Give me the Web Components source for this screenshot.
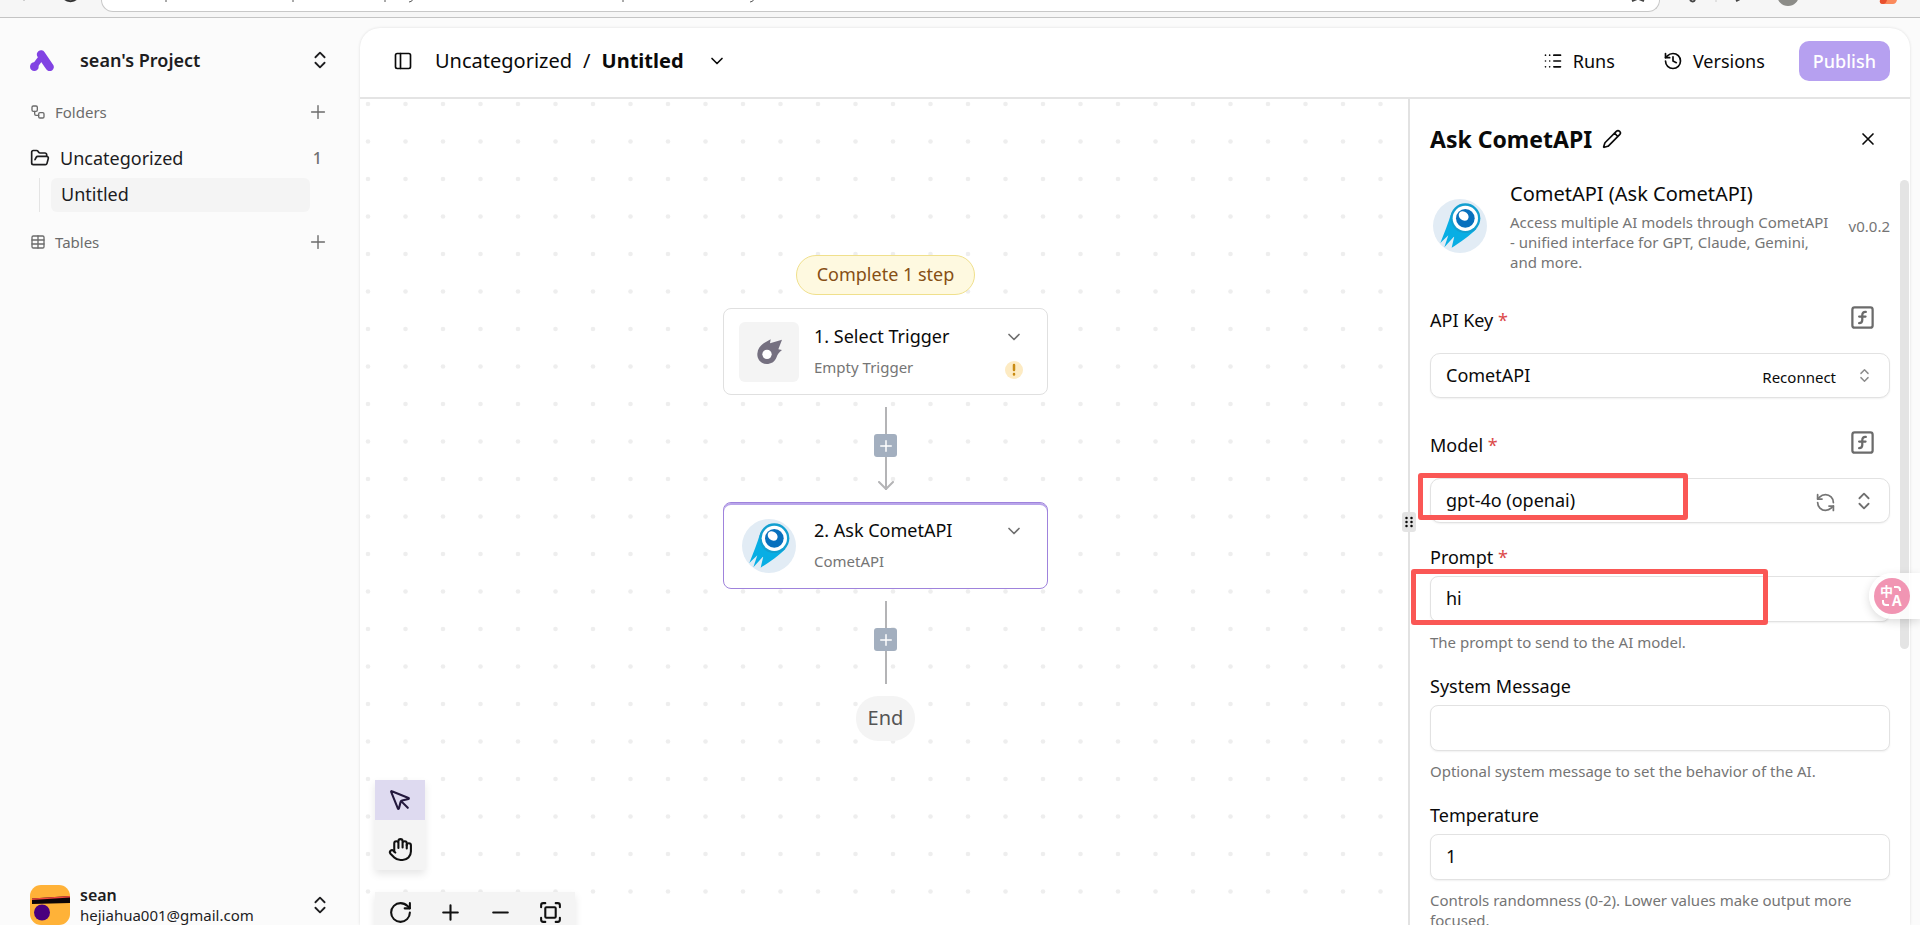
<!DOCTYPE html>
<html lang="en">
<head>
<meta charset="utf-8">
<title>Untitled</title>
<style>
	html, body {
		margin: 0;
		height: 100%;
		overflow: hidden;
	}
	body {
		font-family: 'Noto Sans', 'Open Sans', sans-serif;
		color: #0a0a0a;
	}
</style>
</head>
<body>
<app-shell></app-shell>

<script>
const html = (strings, ...expressions) => {
	let template = document.createElement('template');
	template.innerHTML = strings.reduce(
		(result, string, index) => result + string + (expressions[index] ?? ''), ''
	);
	return template
}

const define = (name, template, Base = HTMLElement) => {
	customElements.define(name, class extends Base {
		constructor() {
			super();
			this.attachShadow({mode: 'open'}).appendChild(
				template.content.cloneNode(true)
			);
		}
	});
}

/**
 * UiIcon
 */

const icons = {
	'chevrons': '<path d="m7 15 5 5 5-5M7 9l5-5 5 5"/>',
	'chevron-down': '<path d="m6 9 6 6 6-6"/>',
	'plus': '<path d="M5 12h14M12 5v14"/>',
	'minus': '<path d="M5 12h14"/>',
	'close': '<path d="M18 6 6 18M6 6l12 12"/>',
	'workflow': '<rect x="3" y="3" width="8" height="8" rx="2"/><path d="M7 11v4a2 2 0 0 0 2 2h4"/><rect x="13" y="13" width="8" height="8" rx="2"/>',
	'folder': '<path d="m6 14 1.500-2.900A2 2 0 0 1 9.240 10H20a2 2 0 0 1 1.940 2.500l-1.540 6a2 2 0 0 1-1.950 1.500H4a2 2 0 0 1-2-2V5a2 2 0 0 1 2-2h3.900a2 2 0 0 1 1.690.900l.810 1.200a2 2 0 0 0 1.670.900H18a2 2 0 0 1 2 2v2"/>',
	'table': '<rect x="3" y="3" width="18" height="18" rx="2"/><path d="M12 3v18M3 9h18M3 15h18"/>',
	'panel': '<rect x="3" y="3" width="18" height="18" rx="2"/><path d="M9 3v18"/>',
	'runs': '<path d="M3 5h.01M3 12h.01M3 19h.01M8 5h.01M8 12h.01M8 19h.01M13 5h8M13 12h8M13 19h8"/>',
	'history': '<path d="M3 12a9 9 0 1 0 9-9 9.750 9.750 0 0 0-6.740 2.740L3 8"/><path d="M3 3v5h5M12 7v5l4 2"/>',
	'pencil': '<path d="M21.170 6.800a1 1 0 0 0-3.980-3.980L3.840 16.170a2 2 0 0 0-.500.830l-1.320 4.350a.500.500 0 0 0 .620.620l4.350-1.320a2 2 0 0 0 .830-.500zM15 5l4 4"/>',
	'function': '<rect x="3" y="3" width="18" height="18" rx="2"/><path d="M9 17c2 0 2.800-1 2.800-2.800V10c0-2 1-3.300 3.200-3M9 11.200h5.700"/>',
	'refresh': '<path d="M21 12a9 9 0 0 0-9-9 9.750 9.750 0 0 0-6.740 2.740L3 8"/><path d="M3 3v5h5M3 12a9 9 0 0 0 9 9 9.750 9.750 0 0 0 6.740-2.740L21 16"/><path d="M16 16h5v5"/>',
	'rotate': '<path d="M21 12a9 9 0 1 1-9-9c2.520 0 4.930 1 6.740 2.740L21 8"/><path d="M21 3v5h-5"/>',
	'pointer': '<path d="M12.600 12.600 19 19M3.700 3.040a.500.500 0 0 0-.660.660l6.500 16a.500.500 0 0 0 .950-.060l1.570-6.080a2 2 0 0 1 1.480-1.480l6.120-1.580a.500.500 0 0 0 .060-.950z"/>',
	'hand': '<path d="M18 11V6a2 2 0 0 0-4 0M14 10V4a2 2 0 0 0-4 0v2M10 10.500V6a2 2 0 0 0-4 0v8"/><path d="M18 8a2 2 0 1 1 4 0v6a8 8 0 0 1-8 8h-2c-2.800 0-4.500-.860-5.990-2.340l-3.600-3.600a2 2 0 0 1 2.830-2.820L7 15"/>',
	'fullscreen': '<path d="M3 7V5a2 2 0 0 1 2-2h2M17 3h2a2 2 0 0 1 2 2v2M21 17v2a2 2 0 0 1-2 2h-2M7 21H5a2 2 0 0 1-2-2v-2"/><rect x="7" y="7" width="10" height="10" rx="1"/>',
	'grip': '<g fill="currentColor" stroke="none"><circle cx="7" cy="4" r="2.500"/><circle cx="7" cy="12" r="2.500"/><circle cx="7" cy="20" r="2.500"/><circle cx="17" cy="4" r="2.500"/><circle cx="17" cy="12" r="2.500"/><circle cx="17" cy="20" r="2.500"/></g>',
};

const uiIconTemplate = html`
	<style>
		:host {
			display: inline-block;
			flex: none;
			width: var(--icon-size, 20px);
			height: var(--icon-size, 20px);
		}
		svg {
			display: block;
			width: 100%;
			height: 100%;
			fill: none;
			stroke: currentColor;
			stroke-width: var(--icon-stroke, 2);
			stroke-linecap: round;
			stroke-linejoin: round;
		}
	</style>
	<svg viewBox='0 0 24 24' aria-hidden='true'></svg>
`;

class UiIcon extends HTMLElement {
	constructor() {
		super();
		this.attachShadow({mode: 'open'}).appendChild(
			uiIconTemplate.content.cloneNode(true)
		);
	}

	static get observedAttributes() { return ['name'] }

	attributeChangedCallback(_name, _oldValue, newValue) {
		this.shadowRoot.querySelector('svg').innerHTML = icons[newValue] ?? '';
	}
}

customElements.define('ui-icon', UiIcon);

/**
 * IconButton
 */

define('icon-button', html`
	<style>
		:host {
			display: inline-flex;
			flex: none;
		}
		button {
			display: flex;
			align-items: center;
			gap: 10px;
			margin: 0;
			padding: 0;
			border: 0;
			background: none;
			color: inherit;
			font: inherit;
			cursor: pointer;
		}
	</style>
	<button type='button'><slot></slot></button>
`);

/**
 * CometLogo
 */

define('comet-logo', html`
	<style>
		:host {
			display: block;
			flex: none;
			width: 54px;
			height: 54px;
		}
		svg { display: block; }
	</style>
	<svg width='54' height='54' viewBox='0 0 162 162' aria-hidden='true'>
		<circle cx='81' cy='81' r='81' fill='#e2ecf5'/>
		<path d='M53 48C46 72 34 102 22 132L46 109 34 145 64 112 56 146C78 133 112 108 131 89Z' fill='#08aee4'/>
		<circle cx='97' cy='58' r='45' fill='#129fd0'/>
		<path d='M54 70C62 98 84 104 108 101L80 118 46 109Z' fill='#08aee4'/>
		<circle cx='97' cy='58' r='38' fill='#fff'/>
		<circle cx='97' cy='58' r='28' fill='#0870bd'/>
		<ellipse cx='92' cy='51' rx='16' ry='13' transform='rotate(40 92 51)' fill='#fff'/>
	</svg>
`);

/**
 * BrowserStrip
 */

define('browser-strip', html`
	<style>
		:host {
			display: block;
			height: 17px;
			flex: none;
			position: relative;
			background: #f6f6f6;
			border-bottom: 1px solid #c4c4c4;
			overflow: hidden;
		}
		.address {
			height: 11px;
			margin: 0 260px 0 101px;
			border: 1px solid #c8c8c8;
			border-top: 0;
			border-radius: 0 0 20px 20px;
			background: #fff;
		}
		svg {
			position: absolute;
			top: 0;
		}
		.start { left: 0; }
		.end { right: 0; }
	</style>
	<div class='address'></div>
	<svg class='start' width='800' height='10' aria-hidden='true' fill='none' stroke='#555'>
		<path d='M24 0v1' stroke='#aaa'/>
		<path d='M64 -2a7 5 0 0 0 13 0' stroke='#333' stroke-width='2'/>
		<path d='M166 0v2M293 0v2M385 0v2M623 0v2'/>
		<path d='M409 2q3 0 4-3M750 2q3 0 4-3'/>
	</svg>
	<svg class='end' width='300' height='10' aria-hidden='true'>
		<path d='M12 1l5-2M24 1l-5-2M70 0q3 3 5 0M116 1l4-2' stroke='#444' stroke-width='2' fill='none'/>
		<path d='M96 0v2' stroke='#ccc'/>
		<circle cx='168' cy='-5' r='11' fill='#8c8c88'/>
		<path d='M260 0h17q-1 4-4 4h-10q-4 0-3-4z' fill='#fb8a5c'/>
		<path d='M260 0h7q-1 4-4 4-4 0-3-4z' fill='#e8502e'/>
	</svg>
`);

/**
 * SideBar
 */

define('side-bar', html`
	<style>
		:host {
			display: flex;
			flex-direction: column;
			box-sizing: border-box;
			width: 360px;
			flex: none;
			padding: 27px 30px 0;
			font-size: 18px;
			line-height: 24px;
			color: #1d1d1f;
		}
		.row {
			display: flex;
			align-items: center;
		}
		.grow { flex: 1; }
		.project {
			height: 30px;
			font-weight: 600;
		}
		.project .grow { padding-left: 26px; }
		.section {
			margin-top: 25px;
			height: 24px;
			font-size: 15px;
			color: #6b6b6b;
			--icon-size: 16px;
		}
		.section .grow { padding-left: 9px; }
		.section icon-button {
			margin-right: 1px;
			--icon-size: 22px;
			--icon-stroke: 1.500;
		}
		.project icon-button, .user icon-button {
			margin-right: -1px;
			--icon-size: 22px;
		}
		.folder {
			margin-top: 22px;
			height: 24px;
		}
		.folder .grow { padding-left: 10px; }
		.count {
			padding-right: 8px;
			font-size: 16px;
			font-weight: 500;
			color: #707070;
		}
		.children {
			margin: 8px 20px 0 9px;
			padding-left: 11px;
			border-left: 1px solid #e4e4e4;
		}
		.children a {
			display: block;
			padding: 4px 10px 6px;
			border-radius: 6px;
			background: #f4f4f4;
			color: inherit;
			text-decoration: none;
		}
		.tables { margin-top: 18px; }
		.user {
			margin-top: auto;
			gap: 10px;
			height: 40px;
			line-height: 20px;
			font-size: 15px;
		}
		.user b {
			display: block;
			font-size: 16px;
			font-weight: 600;
		}
	</style>
	<div class='row project'>
		<svg width='24' height='21' viewBox='0 0 72 63' aria-hidden='true' fill='#8142e3' stroke='#8142e3' stroke-linecap='round'>
			<path d='M33 13 59 51' stroke-width='25'/>
			<path d='M15 47 32 25' stroke-width='17'/>
			<circle cx='13' cy='50' r='13' stroke='none'/>
		</svg>
		<span class='grow'>sean's Project</span>
		<icon-button><ui-icon name='chevrons'></ui-icon></icon-button>
	</div>
	<div class='row section'>
		<ui-icon name='workflow'></ui-icon>
		<span class='grow'>Folders</span>
		<icon-button><ui-icon name='plus'></ui-icon></icon-button>
	</div>
	<div class='row folder'>
		<ui-icon name='folder'></ui-icon>
		<span class='grow'>Uncategorized</span>
		<span class='count'>1</span>
	</div>
	<div class='children'><a href='#untitled'>Untitled</a></div>
	<div class='row section tables'>
		<ui-icon name='table'></ui-icon>
		<span class='grow'>Tables</span>
		<icon-button><ui-icon name='plus'></ui-icon></icon-button>
	</div>
	<div class='row user'>
		<svg width='40' height='40' viewBox='0 0 40 40' aria-hidden='true'>
			<rect width='40' height='40' rx='11' fill='#ffb238'/>
			<path d='M2 13.500 40 11v7L2 19z' fill='#0c0508'/>
			<path d='M2 13.500 40 11v1.500L2 15z' fill='#f0483e'/>
			<circle cx='12' cy='27.500' r='8' fill='#49007e'/>
		</svg>
		<span class='grow'><b>sean</b>hejiahua001@gmail.com</span>
		<icon-button><ui-icon name='chevrons'></ui-icon></icon-button>
	</div>
`);

/**
 * FlowHeader
 */

define('flow-header', html`
	<style>
		:host {
			display: flex;
			align-items: center;
			flex: none;
			box-sizing: border-box;
			height: 71px;
			padding: 0 20px 3px 33px;
			border-bottom: 2px solid #e4e4e4;
			font-size: 20px;
			line-height: 28px;
		}
		nav {
			display: flex;
			align-items: center;
			flex: 1;
			gap: 11px;
			padding-left: 22px;
		}
		nav a {
			color: inherit;
			text-decoration: none;
		}
		b { font-weight: 700; }
		nav icon-button {
			padding-left: 12px;
			--icon-size: 20px;
		}
		.action {
			margin-right: 48px;
			font-size: 18px;
		}
		.publish {
			box-sizing: border-box;
			height: 40px;
			margin-left: -14px;
			padding: 0 14px;
			border: 0;
			border-radius: 10px;
			background: #b6a0f0;
			color: #fff;
			font: inherit;
			font-size: 18px;
			font-weight: 500;
		}
	</style>
	<icon-button><ui-icon name='panel'></ui-icon></icon-button>
	<nav>
		<a href='#uncategorized'>Uncategorized</a>
		<span>/</span>
		<b>Untitled</b>
		<icon-button><ui-icon name='chevron-down'></ui-icon></icon-button>
	</nav>
	<icon-button class='action'><ui-icon name='runs'></ui-icon>Runs</icon-button>
	<icon-button class='action'><ui-icon name='history'></ui-icon>Versions</icon-button>
	<button class='publish' type='button'>Publish</button>
`);

/**
 * FlowStep
 */

define('flow-step', html`
	<style>
		:host {
			display: grid;
			grid-template-columns: 60px 1fr auto;
			column-gap: 15px;
			align-items: center;
			box-sizing: border-box;
			width: 325px;
			height: 87px;
			padding: 0 20px 0 15px;
			border: 1px solid #e0e0e0;
			border-radius: 8px;
			background: #fff;
			font-size: 18px;
			line-height: 26px;
		}
		:host([selected]) {
			border-color: #9f83dc;
			box-shadow: inset 0 2px #b9a5ea;
		}
		.icon {
			display: flex;
			align-items: center;
			justify-content: center;
			height: 60px;
			border-radius: 6px;
		}
		:host(:not([selected])) .icon { background: #f4f4f4; }
		small {
			display: block;
			margin-top: 5px;
			font-size: 15px;
			color: #757575;
		}
		.side {
			display: flex;
			flex-direction: column;
			align-items: center;
			align-self: start;
			gap: 14px;
			width: 26px;
			padding-top: 18px;
			color: #6f6f6f;
		}
	</style>
	<div class='icon'><slot name='icon'></slot></div>
	<div><slot></slot><small><slot name='subtitle'></slot></small></div>
	<div class='side'>
		<icon-button><ui-icon name='chevron-down'></ui-icon></icon-button>
		<slot name='status'></slot>
	</div>
`);

/**
 * FlowEdge
 */

define('flow-edge', html`
	<style>
		:host {
			display: flex;
			flex-direction: column;
			align-items: center;
			padding: 12px 0;
			color: #b4b4b6;
		}
		.line {
			width: 2px;
			height: 27px;
			background: currentColor;
		}
		.tail { height: 33px; }
		button {
			display: flex;
			align-items: center;
			justify-content: center;
			width: 23px;
			height: 23px;
			padding: 0;
			border: 0;
			border-radius: 3px;
			background: #a3afbf;
			color: #fff;
			--icon-size: 18px;
		}
		svg {
			display: none;
			margin-top: -9px;
		}
		:host([arrow]) svg { display: block; }
	</style>
	<div class='line'></div>
	<button type='button' aria-label='Add step'><ui-icon name='plus'></ui-icon></button>
	<div class='line tail'></div>
	<svg width='16' height='9' viewBox='0 0 16 9' fill='none' stroke='currentColor' stroke-width='2' stroke-linecap='round' stroke-linejoin='round' aria-hidden='true'><path d='M1 1l7 7 7-7'/></svg>
`);

/**
 * FlowCanvas
 */

define('flow-canvas', html`
	<style>
		:host {
			display: block;
			flex: 1;
			min-width: 0;
			position: relative;
			overflow: hidden;
		}
		.dots {
			position: absolute;
			inset: 0;
			width: 100%;
			height: 100%;
		}
		.flow {
			position: relative;
			display: flex;
			flex-direction: column;
			align-items: center;
			padding: 156px 0 0 3px;
		}
		.todo {
			box-sizing: border-box;
			height: 40px;
			margin-bottom: 13px;
			padding: 0 20px;
			border: 1px solid #f0e08c;
			border-radius: 20px;
			background: #fef9e0;
			color: #864f14;
			font-size: 18px;
			line-height: 36px;
		}
		.end {
			padding: 8px 12px 9px;
			border-radius: 22px;
			background: #f4f4f4;
			color: #545454;
			font-size: 20px;
			line-height: 28px;
		}
		.warning {
			display: block;
		}
		.tools, .zoom {
			position: absolute;
			left: 15px;
			display: flex;
			background: #f4f4f4;
			box-shadow: 0 4px 8px rgba(0, 0, 0, 0.1);
			color: #111;
			--icon-size: 25px;
		}
		.tools {
			flex-direction: column;
			bottom: 55px;
		}
		.zoom { bottom: -7px; }
		.tools icon-button, .zoom icon-button {
			justify-content: center;
			width: 50px;
			height: 40px;
		}
		.tools icon-button + icon-button { padding-top: 8px; height: 42px; }
		.tools icon-button:first-child { background: #dedaf0; color: #23183d; }
	</style>
	<svg class='dots' aria-hidden='true'>
		<pattern id='dots' width='75' height='75' patternUnits='userSpaceOnUse'>
			<g fill='#eeeeee'>
				<circle cx='8' cy='5' r='2.300'/>
				<circle cx='45.500' cy='5' r='2.300'/>
				<circle cx='8' cy='42.500' r='2.300'/>
				<circle cx='45.500' cy='42.500' r='2.300'/>
			</g>
		</pattern>
		<rect width='100%' height='100%' fill='url(#dots)'/>
	</svg>
	<div class='flow'>
		<div class='todo'>Complete 1 step</div>
		<flow-step>
			<svg slot='icon' width='25' height='25' viewBox='0 0 75 75' aria-hidden='true'>
				<path d='M1 44C2 30 10 20 20 13L41 1 39 13 75 2 64 31 75 33C66 41 61 46 59 54 53 69 42 75 29 75 12 75 0 61 1 44Z' fill='#757080'/>
				<circle cx='30' cy='46' r='14' fill='#fff'/>
			</svg>
			1. Select Trigger
			<span slot='subtitle'>Empty Trigger</span>
			<svg slot='status' class='warning' width='18' height='18' viewBox='0 0 18 18' aria-hidden='true'>
				<circle cx='9' cy='9' r='9' fill='#fdebc3'/>
				<path d='M9 4v5M9 13v.5' stroke='#c98a12' stroke-width='2.500' stroke-linecap='round'/>
			</svg>
		</flow-step>
		<flow-edge arrow></flow-edge>
		<flow-step selected>
			<comet-logo slot='icon'></comet-logo>
			2. Ask CometAPI
			<span slot='subtitle'>CometAPI</span>
		</flow-step>
		<flow-edge></flow-edge>
		<div class='end'>End</div>
	</div>
	<div class='tools'>
		<icon-button><ui-icon name='pointer'></ui-icon></icon-button>
		<icon-button><ui-icon name='hand'></ui-icon></icon-button>
	</div>
	<div class='zoom'>
		<icon-button><ui-icon name='rotate'></ui-icon></icon-button>
		<icon-button><ui-icon name='plus'></ui-icon></icon-button>
		<icon-button><ui-icon name='minus'></ui-icon></icon-button>
		<icon-button><ui-icon name='fullscreen'></ui-icon></icon-button>
	</div>
`);

/**
 * FormField
 *
 * type: 'select' or 'text'. The default slot holds extra buttons of the box.
 */

const formFieldTemplate = html`
	<style>
		:host {
			display: block;
			font-size: 18px;
			line-height: 24px;
		}
		.head {
			display: flex;
			align-items: flex-start;
			justify-content: space-between;
		}
		label { align-self: flex-end; }
		label sup {
			color: #dc4a4a;
			font-size: 18px;
			line-height: 0;
			vertical-align: baseline;
		}
		.function {
			display: none;
			padding-right: 14px;
			color: #6b6b6b;
			--icon-size: 27px;
		}
		:host([type='select']) .head { height: 28px; margin-bottom: 21px; }
		:host([type='select']) .function { display: block; }
		:host([type='text']) .head { height: 24px; margin-bottom: 7px; }
		.box {
			position: relative;
			display: flex;
			align-items: center;
			box-sizing: border-box;
			height: 46px;
			border: 1px solid #e2e2e2;
			border-radius: 8px;
			background: #fff;
			box-shadow: 0 1px 2px rgba(0, 0, 0, 0.06);
		}
		:host([type='select']) .box { height: 45px; border-radius: 10px; }
		input, select {
			flex: 1;
			min-width: 0;
			height: 100%;
			box-sizing: border-box;
			margin: 0;
			padding: 0 15px 2px;
			border: 0;
			outline: 0;
			appearance: none;
			background: none;
			color: inherit;
			font: inherit;
		}
		.arrows {
			display: none;
			width: 22px;
			justify-content: center;
			padding: 0 14px 0 17px;
			color: #6f6f6f;
			--icon-size: 22px;
		}
		:host([type='select']) .arrows { display: flex; }
		:host([small-arrows]) .arrows { color: #8c8c8c; --icon-size: 17px; }
		p {
			margin: 10px 0 0;
			font-size: 15px;
			line-height: 20px;
			color: #757575;
		}
		p:empty { display: none; }
	</style>
	<div class='head'>
		<label for='control'></label>
		<icon-button class='function'><ui-icon name='function'></ui-icon></icon-button>
	</div>
	<div class='box'>
		<slot></slot>
		<div class='arrows'><ui-icon name='chevrons'></ui-icon></div>
		<slot name='mark'></slot>
	</div>
	<p></p>
`;

class FormField extends HTMLElement {
	constructor() {
		super();
		this.attachShadow({mode: 'open'}).appendChild(
			formFieldTemplate.content.cloneNode(true)
		);
	}

	connectedCallback() {
		const {shadowRoot} = this;
		const value = this.getAttribute('value') ?? '';

		const label = shadowRoot.querySelector('label');
		label.textContent = this.getAttribute('label');
		if (this.hasAttribute('required'))
			label.insertAdjacentHTML('beforeend', ' <sup>*</sup>');

		shadowRoot.querySelector('p').textContent = this.getAttribute('hint') ?? '';

		let control;
		if (this.getAttribute('type') === 'select') {
			control = document.createElement('select');
			control.add(new Option(value));
		} else {
			control = document.createElement('input');
			control.value = value;
		}
		control.id = 'control';
		shadowRoot.querySelector('.box').prepend(control);
	}
}

customElements.define('form-field', FormField);

/**
 * MarkFrame
 */

define('mark-frame', html`
	<style>
		:host {
			position: absolute;
			box-sizing: border-box;
			border: 5px solid #fa5755;
			border-radius: 3px;
			pointer-events: none;
		}
	</style>
`);

/**
 * StepSettings
 */

define('step-settings', html`
	<style>
		:host {
			display: flex;
			flex-direction: column;
			box-sizing: border-box;
			width: 502px;
			flex: none;
			position: relative;
			border-left: 2px solid #e2e2e2;
		}
		header {
			display: flex;
			align-items: center;
			gap: 10px;
			height: 80px;
			flex: none;
			padding: 0 32px 0 20px;
		}
		h2 {
			margin: 0;
			font-size: 23px;
			font-weight: 700;
			line-height: 30px;
		}
		header icon-button:last-child { margin-left: auto; }
		.scroller {
			flex: 1;
			min-height: 0;
			overflow: hidden;
			padding: 0 20px;
		}
		.piece {
			display: grid;
			grid-template-columns: 54px 1fr auto;
			align-items: center;
			column-gap: 23px;
			padding: 0 0 32px 3px;
			font-size: 15px;
			line-height: 20px;
			color: #757575;
		}
		.piece h3 {
			margin: 0 0 3px;
			font-size: 20px;
			font-weight: 400;
			line-height: 30px;
			color: #0a0a0a;
			white-space: nowrap;
		}
		.piece p {
			margin: 0;
			padding-right: 4px;
		}
		.piece .version { margin-left: -12px; }
		.fields {
			display: flex;
			flex-direction: column;
			gap: 22px;
		}
		.first { margin-bottom: 9px; }
		.model-refresh { padding-top: 4px; color: #757575; --icon-size: 21px; }
		.reconnect { padding-top: 2px; font-size: 15px; }
		.thumb {
			position: absolute;
			right: 1px;
			top: 81px;
			width: 9px;
			height: 469px;
			border-radius: 5px;
			background: #e4e4e4;
		}
		.grip {
			position: absolute;
			left: -8px;
			top: 50%;
			display: flex;
			align-items: center;
			justify-content: center;
			width: 14px;
			height: 20px;
			border-radius: 3px;
			background: #e4e4e4;
			--icon-size: 12px;
		}
	</style>
	<header>
		<h2>Ask CometAPI</h2>
		<icon-button><ui-icon name='pencil'></ui-icon></icon-button>
		<icon-button><ui-icon name='close'></ui-icon></icon-button>
	</header>
	<div class='scroller'>
		<div class='piece'>
			<comet-logo></comet-logo>
			<div>
				<h3>CometAPI (Ask CometAPI)</h3>
				<p>Access multiple AI models through CometAPI - unified interface for GPT, Claude, Gemini, and more.</p>
			</div>
			<span class='version'>v0.0.2</span>
		</div>
		<div class='fields'>
			<form-field class='first' type='select' label='API Key' value='CometAPI' required small-arrows>
				<icon-button class='reconnect'>Reconnect</icon-button>
			</form-field>
			<form-field type='select' label='Model' value='gpt-4o (openai)' required>
				<icon-button class='model-refresh'><ui-icon name='refresh'></ui-icon></icon-button>
				<mark-frame slot='mark' style='left: -13px; top: -6px; width: 270px; height: 47px'></mark-frame>
			</form-field>
			<form-field type='text' label='Prompt' value='hi' hint='The prompt to send to the AI model.' required>
				<mark-frame slot='mark' style='left: -20px; top: -8px; width: 357px; height: 56px'></mark-frame>
			</form-field>
			<form-field type='text' label='System Message' hint='Optional system message to set the behavior of the AI.'></form-field>
			<form-field type='text' label='Temperature' value='1' hint='Controls randomness (0-2). Lower values make output more focused.'></form-field>
		</div>
	</div>
	<div class='thumb'></div>
	<div class='grip'><ui-icon name='grip'></ui-icon></div>
`);

/**
 * TranslateButton
 */

define('translate-button', html`
	<style>
		:host {
			position: absolute;
			right: 0;
			top: 573px;
		}
		button {
			display: block;
			width: 51px;
			height: 46px;
			padding: 5px;
			border: 0;
			border-radius: 23px 0 0 23px;
			background: rgba(255, 255, 255, 0.85);
			box-shadow: 0 3px 10px rgba(0, 0, 0, 0.14);
		}
		svg { display: block; }
		text {
			font-family: 'Noto Sans CJK SC', 'Noto Sans', sans-serif;
			font-weight: 700;
			fill: #fff;
		}
	</style>
	<button type='button' aria-label='Translate'>
		<svg width='36' height='36' viewBox='0 0 36 36'>
			<circle cx='18' cy='18' r='18' fill='#f195b3'/>
			<text x='6' y='18' font-size='13'>中</text>
			<text x='18' y='28' font-size='15'>A</text>
			<path d='M20 9h3q3 0 3 3v1M9 22v2q0 3 3 3h3' fill='none' stroke='#fff' stroke-width='2'/>
		</svg>
	</button>
`);

/**
 * AppShell
 */

define('app-shell', html`
	<style>
		:host {
			display: flex;
			flex-direction: column;
			position: relative;
			height: 100vh;
			background: #fbfbfb;
			overflow: hidden;
		}
		.page {
			display: flex;
			flex: 1;
			min-height: 0;
		}
		main {
			display: flex;
			flex-direction: column;
			flex: 1;
			min-width: 0;
			margin: 10px 10px 0 0;
			border-radius: 20px 20px 0 0;
			background: #fff;
			box-shadow: 0 0 3px rgba(0, 0, 0, 0.12);
			overflow: hidden;
		}
		.work {
			display: flex;
			flex: 1;
			min-height: 0;
		}
	</style>
	<browser-strip></browser-strip>
	<div class='page'>
		<side-bar></side-bar>
		<main>
			<flow-header></flow-header>
			<div class='work'>
				<flow-canvas></flow-canvas>
				<step-settings></step-settings>
			</div>
		</main>
	</div>
	<translate-button></translate-button>
`);
</script>
</body>
</html>
